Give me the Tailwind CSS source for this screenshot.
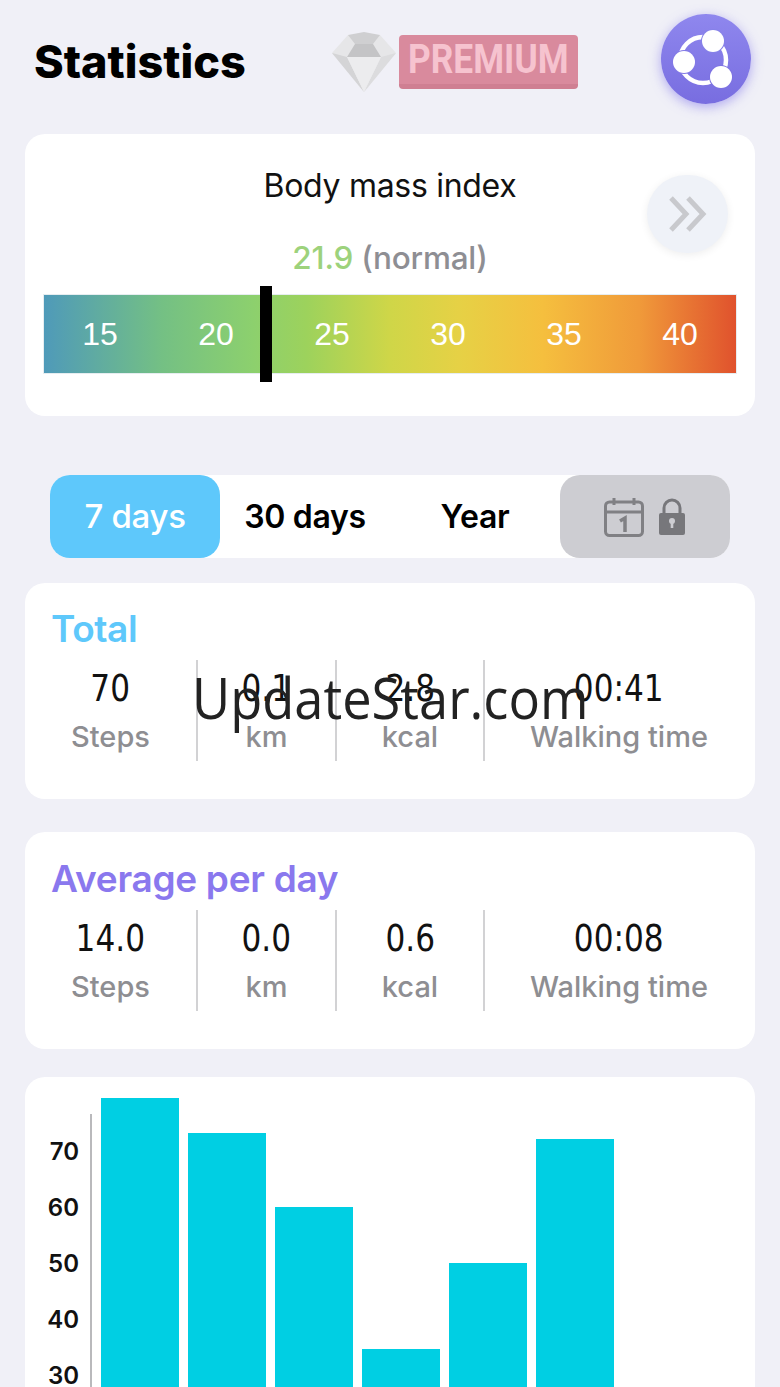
<!DOCTYPE html>
<html lang="en">
<head>
    <meta charset="UTF-8">
    <title>Statistics</title>
    <script src="https://cdn.jsdelivr.net/npm/@tailwindcss/browser@4"></script>
</head>
<body>
    <div class="relative w-[780px] h-[1387px] overflow-hidden bg-[#f0f0f7] font-['Inter',sans-serif]">

        <!-- header -->
        <div class="h-[134px] flex items-center pl-[34px]">
            <h1 class="w-[297px] text-[45px] leading-[52px] font-extrabold text-black mb-[10px]">Statistics</h1>
            <svg class="w-[66px] h-[62px] mb-[11px]" viewBox="0 0 66 62">
                <polygon points="17,4 49,4 65,22 33,61 1,22" fill="#e6e6e8"/>
                <polygon points="17,4 33,1 49,4 42,13 24,13" fill="#cfcfd1"/>
                <polygon points="24,13 42,13 50,26 16,26" fill="#c4c4c6"/>
                <polygon points="1,22 16,26 33,61" fill="#d4d4d6"/>
                <polygon points="65,22 50,26 33,61" fill="#dcdcde"/>
                <polygon points="16,26 50,26 33,61" fill="#ececee"/>
            </svg>
            <div class="ml-[2px] mb-[10px] w-[179px] h-[54px] rounded-[4px] bg-[#d98a9d] border-b-[5px] border-[#cf7f92] flex items-center justify-center">
                <span class="text-[#f6c3cf] text-[41px] leading-none font-bold font-['Roboto',sans-serif] scale-x-[0.86]">PREMIUM</span>
            </div>
            <div class="ml-[83px] mb-[16px] w-[90px] h-[90px] rounded-full bg-gradient-to-b from-[#8f87ee] to-[#786de0] shadow-[0_3px_12px_rgba(122,110,235,0.55)] flex items-center justify-center">
                <svg class="w-[90px] h-[90px]" viewBox="0 0 90 90">
                    <circle cx="42" cy="46" r="23" fill="none" stroke="#fff" stroke-width="4.5"/>
                    <circle cx="52" cy="27" r="11" fill="#fff" stroke="#8682e8" stroke-width="2" paint-order="stroke"/>
                    <circle cx="23" cy="48" r="11" fill="#fff" stroke="#8279e6" stroke-width="2" paint-order="stroke"/>
                    <circle cx="60" cy="63" r="11" fill="#fff" stroke="#7d72e2" stroke-width="2" paint-order="stroke"/>
                </svg>
            </div>
        </div>

        <div class="px-[25px]">
            <!-- BMI card -->
            <div class="relative h-[282px] bg-white rounded-[20px] pt-[32px] px-[18px]">
                <p class="text-center text-[32px] leading-[40px] text-[#111] tracking-[-0.3px]">Body mass index</p>
                <p class="mt-[32px] text-center text-[31.5px] leading-[40px] font-medium tracking-[-0.2px]">
                    <span class="text-[#9dd27c]">21.9</span> <span class="text-[#8e8e93]">(normal)</span>
                </p>
                <div class="relative mt-[16px] h-[80px] grid grid-cols-[repeat(6,116px)] justify-center items-center border border-[#e6edf0] bg-[linear-gradient(90deg,#4f9ab9_0%,#74c084_17%,#8cd06e_30%,#9dd25c_38%,#cfd648_50%,#e6d145_60%,#f5bf3e_72%,#f09a3a_86%,#e0522d_100%)]">
                    <span class="text-center text-white text-[32px] font-['Liberation_Sans',sans-serif]">15</span>
                    <span class="text-center text-white text-[32px] font-['Liberation_Sans',sans-serif]">20</span>
                    <span class="text-center text-white text-[32px] font-['Liberation_Sans',sans-serif]">25</span>
                    <span class="text-center text-white text-[32px] font-['Liberation_Sans',sans-serif]">30</span>
                    <span class="text-center text-white text-[32px] font-['Liberation_Sans',sans-serif]">35</span>
                    <span class="text-center text-white text-[32px] font-['Liberation_Sans',sans-serif]">40</span>
                    <div class="absolute left-[216px] top-[-9px] w-[12px] h-[96px] bg-black"></div>
                </div>
                <button class="absolute left-[622px] top-[41px] w-[81px] h-[78px] rounded-full bg-[#eff2f8] shadow-[0_2px_8px_rgba(0,0,0,0.07)] flex items-center justify-center">
                    <svg class="w-[38px] h-[36px]" viewBox="0 0 38 36" fill="none" stroke="#c8c9cd" stroke-width="5">
                        <path d="M2 2 L17 18 L2 34"/>
                        <path d="M19 2 L34 18 L19 34"/>
                    </svg>
                </button>
            </div>

            <!-- range tabs -->
            <div class="mt-[59px] mx-[25px] h-[83px] grid grid-cols-4 bg-white rounded-[20px] text-[32px] font-semibold text-black tracking-[-0.3px]">
                <div class="flex items-center justify-center rounded-[20px] bg-[#5ec8fb] text-white font-medium text-[33px]">7 days</div>
                <div class="flex items-center justify-center">30 days</div>
                <div class="flex items-center justify-center">Year</div>
                <div class="flex items-center justify-center gap-[14px] rounded-[20px] bg-[#cdcdd2]">
                    <svg class="w-[40px] h-[40px]" viewBox="0 0 40 40" fill="none" stroke="#808084" stroke-width="3">
                        <rect x="1.5" y="5" width="37" height="33.5" rx="4"/>
                        <path d="M1.5 15 H38.5"/>
                        <path d="M10 1 V8 M30 1 V8"/>
                        <path d="M16 24 L21 21 V35" stroke-width="3.5"/>
                    </svg>
                    <svg class="w-[28px] h-[37px]" viewBox="0 0 28 37">
                        <path d="M6 17 V10 a8 8 0 0 1 16 0 V17" fill="none" stroke="#77777b" stroke-width="3"/>
                        <rect x="1" y="15" width="26" height="22" rx="2" fill="#77777b"/>
                        <circle cx="14" cy="23" r="3" fill="#cdcdd2"/>
                        <rect x="12.7" y="24" width="2.6" height="6" fill="#cdcdd2"/>
                    </svg>
                </div>
            </div>

            <!-- total -->
            <div class="mt-[25px] h-[216px] bg-white rounded-[20px] pt-[24px]">
                <h2 class="pl-[26px] text-[37px] leading-[44px] font-semibold text-[#5ec8fb] tracking-[-0.4px]">Total</h2>
                <div class="mt-[9px] h-[101px] grid grid-cols-[173px_139px_148px_270px]">
                    <div class="flex flex-col items-center border-r-2 border-[#d2d2d4]">
                        <span class="mt-[6px] text-[38px] leading-[44px] text-[#111] font-['DejaVu_Sans',sans-serif] scale-x-[0.82]">70</span>
                        <span class="mt-[9px] text-[29px] leading-[36px] font-medium text-[#8e8e92]">Steps</span>
                    </div>
                    <div class="flex flex-col items-center border-r-2 border-[#d2d2d4]">
                        <span class="mt-[6px] text-[38px] leading-[44px] text-[#111] font-['DejaVu_Sans',sans-serif] scale-x-[0.82]">0.1</span>
                        <span class="mt-[9px] text-[29px] leading-[36px] font-medium text-[#8e8e92]">km</span>
                    </div>
                    <div class="flex flex-col items-center border-r-2 border-[#d2d2d4]">
                        <span class="mt-[6px] text-[38px] leading-[44px] text-[#111] font-['DejaVu_Sans',sans-serif] scale-x-[0.82]">2.8</span>
                        <span class="mt-[9px] text-[29px] leading-[36px] font-medium text-[#8e8e92]">kcal</span>
                    </div>
                    <div class="flex flex-col items-center pr-[2px]">
                        <span class="mt-[6px] text-[38px] leading-[44px] text-[#111] font-['DejaVu_Sans',sans-serif] scale-x-[0.82]">00:41</span>
                        <span class="mt-[9px] text-[29px] leading-[36px] font-medium text-[#8e8e92]">Walking time</span>
                    </div>
                </div>
            </div>

            <!-- average -->
            <div class="mt-[33px] h-[217px] bg-white rounded-[20px] pt-[25px]">
                <h2 class="pl-[26px] text-[37px] leading-[44px] font-semibold text-[#8a78ee] tracking-[-0.3px]">Average per day</h2>
                <div class="mt-[9px] h-[101px] grid grid-cols-[173px_139px_148px_270px]">
                    <div class="flex flex-col items-center border-r-2 border-[#d2d2d4]">
                        <span class="mt-[6px] text-[38px] leading-[44px] text-[#111] font-['DejaVu_Sans',sans-serif] scale-x-[0.82]">14.0</span>
                        <span class="mt-[9px] text-[29px] leading-[36px] font-medium text-[#8e8e92]">Steps</span>
                    </div>
                    <div class="flex flex-col items-center border-r-2 border-[#d2d2d4]">
                        <span class="mt-[6px] text-[38px] leading-[44px] text-[#111] font-['DejaVu_Sans',sans-serif] scale-x-[0.82]">0.0</span>
                        <span class="mt-[9px] text-[29px] leading-[36px] font-medium text-[#8e8e92]">km</span>
                    </div>
                    <div class="flex flex-col items-center border-r-2 border-[#d2d2d4]">
                        <span class="mt-[6px] text-[38px] leading-[44px] text-[#111] font-['DejaVu_Sans',sans-serif] scale-x-[0.82]">0.6</span>
                        <span class="mt-[9px] text-[29px] leading-[36px] font-medium text-[#8e8e92]">kcal</span>
                    </div>
                    <div class="flex flex-col items-center pr-[2px]">
                        <span class="mt-[6px] text-[38px] leading-[44px] text-[#111] font-['DejaVu_Sans',sans-serif] scale-x-[0.82]">00:08</span>
                        <span class="mt-[9px] text-[29px] leading-[36px] font-medium text-[#8e8e92]">Walking time</span>
                    </div>
                </div>
            </div>

            <!-- chart -->
            <div class="mt-[28px] h-[340px] bg-white rounded-t-[20px] flex pt-[21px]">
                <div class="w-[54px] pt-[26px] flex flex-col items-end text-[24px] leading-[56px] font-semibold text-[#111]">
                    <span>70</span>
                    <span>60</span>
                    <span>50</span>
                    <span>40</span>
                    <span>30</span>
                </div>
                <div class="ml-[11px] mt-[16px] w-[2px] bg-[#b9b9bc]"></div>
                <div class="ml-[9px] flex items-start gap-[9px]">
                    <div class="w-[78px] h-[320px] bg-[#00cfe3]"></div>
                    <div class="w-[78px] h-[320px] mt-[35px] bg-[#00cfe3]"></div>
                    <div class="w-[78px] h-[320px] mt-[109px] bg-[#00cfe3]"></div>
                    <div class="w-[78px] h-[320px] mt-[251px] bg-[#00cfe3]"></div>
                    <div class="w-[78px] h-[320px] mt-[165px] bg-[#00cfe3]"></div>
                    <div class="w-[78px] h-[320px] mt-[41px] bg-[#00cfe3]"></div>
                </div>
            </div>
        </div>

        <!-- watermark -->
        <div class="absolute left-[192px] top-[658px] origin-left scale-x-[0.936] text-[56px] leading-[78px] text-[#222] font-['Open_Sans',sans-serif] whitespace-nowrap">UpdateStar.com</div>
    </div>
</body>
</html>
